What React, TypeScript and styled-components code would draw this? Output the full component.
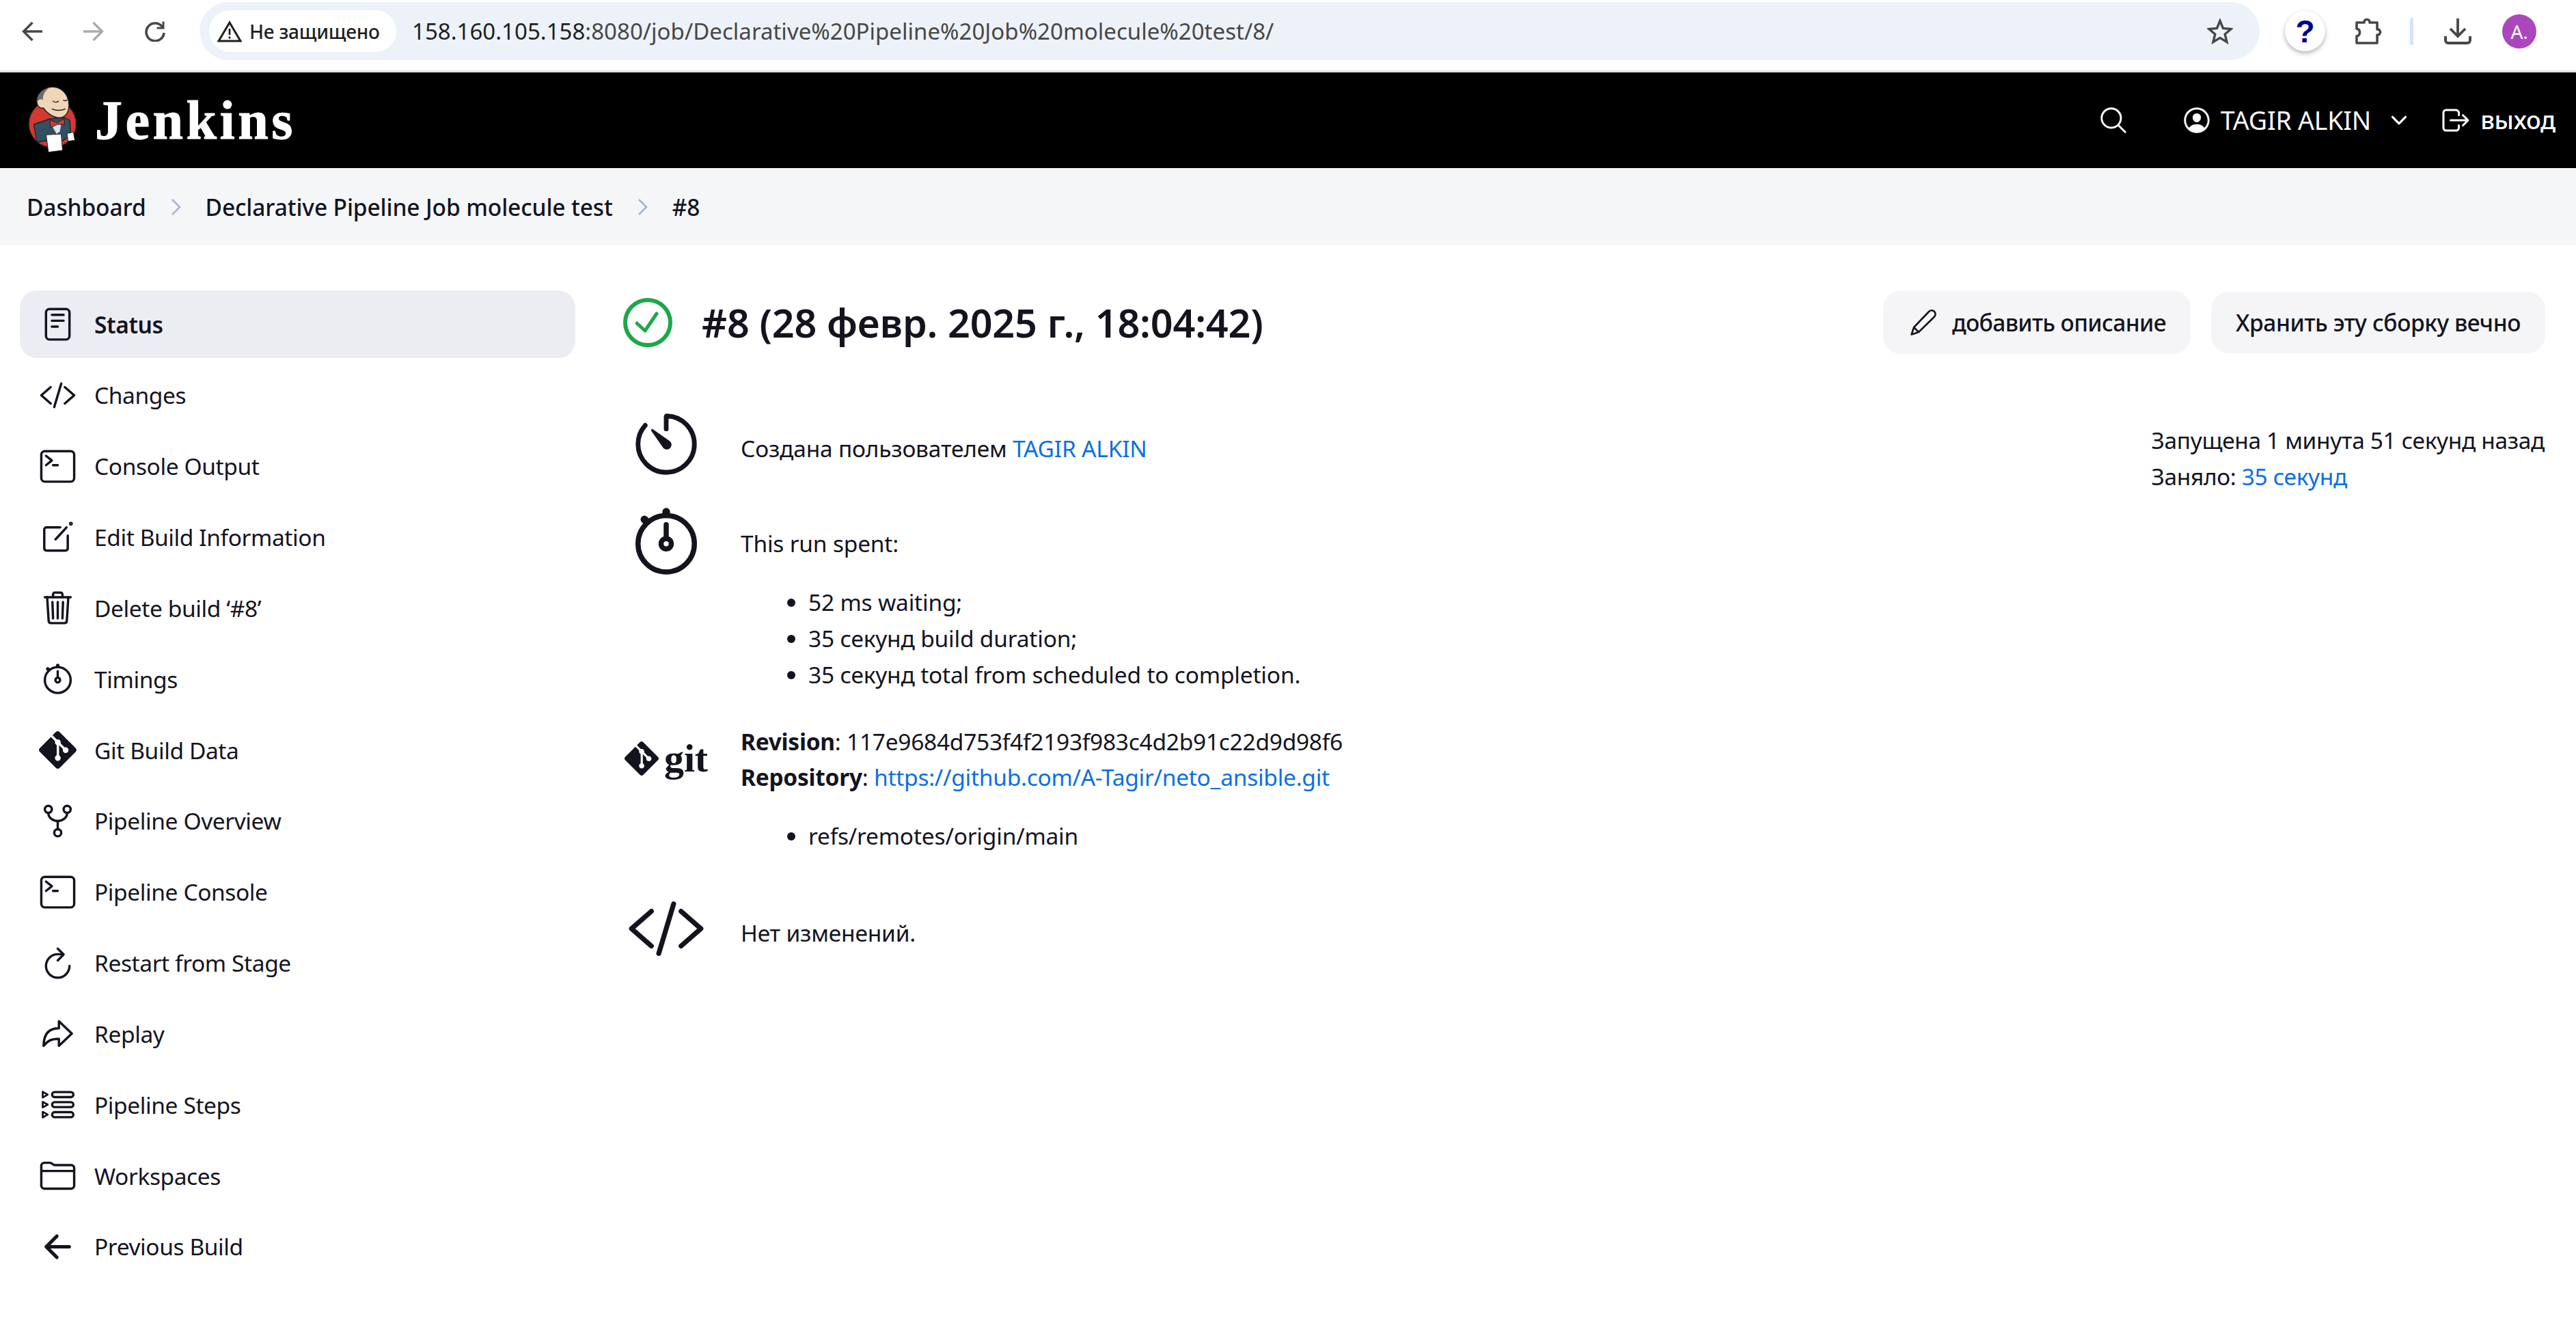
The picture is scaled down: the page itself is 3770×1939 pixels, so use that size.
import React from 'react';
import styled, { createGlobalStyle } from 'styled-components';
import {
  IoReaderOutline,
  IoCodeSlashOutline,
  IoTerminalOutline,
  IoTrashOutline,
  IoStopwatchOutline,
  IoGitNetworkOutline,
  IoRefreshOutline,
  IoArrowRedoOutline,
  IoFolderOutline,
  IoArrowBackOutline,
  IoTimerOutline,
  IoSearchOutline,
  IoPersonCircleOutline,
  IoChevronDownOutline,
  IoLogOutOutline,
} from 'react-icons/io5';
import { SiGit } from 'react-icons/si';

const GlobalStyle = createGlobalStyle`
  html, body {
    margin: 0;
    padding: 0;
    background: #fff;
  }
  body {
    font-family: "Noto Sans", "Open Sans", sans-serif;
    font-size: 33.5px;
    line-height: 52px;
    letter-spacing: -0.2px;
    color: #14141f;
  }
`;

const Page = styled.div`
  width: 3770px;
  height: 1939px;
  overflow: hidden;
  display: flex;
  flex-direction: column;
`;

/* browser toolbar */
const BrowserBar = styled.div`
  height: 100px;
  flex: none;
  display: flex;
  align-items: flex-start;
  padding: 3px 58px 0 32px;
  box-sizing: content-box;
  border-bottom: 3px solid #e3e4e6;
  background: #fff;
`;

const NavIcons = styled.div`
  display: flex;
  gap: 60px;
  height: 85px;
  align-items: center;
`;

const NavSvg = styled.svg<{ $muted?: boolean }>`
  width: 30px;
  height: 30px;
  fill: none;
  stroke: ${(p) => (p.$muted ? '#ababab' : '#474747')};
  stroke-width: 3.4;
`;

const AddressBar = styled.div`
  flex: 1;
  height: 85px;
  margin: 0 37px 0 50px;
  padding: 0 39px 0 14px;
  border-radius: 43px;
  background: #edf2fa;
  display: flex;
  align-items: center;
`;

const SecurityChip = styled.div`
  height: 61px;
  width: 274px;
  box-sizing: border-box;
  padding-left: 12px;
  border-radius: 31px;
  background: #fff;
  display: flex;
  align-items: center;
  gap: 11px;
  font-family: "Noto Sans", sans-serif;
  font-size: 28px;
  font-weight: 500;
  color: #1f1f1f;
  white-space: nowrap;
`;

const UrlText = styled.div`
  flex: 1;
  margin-left: 23px;
  font-size: 33px;
  letter-spacing: 0.02px;
  color: #474747;
  white-space: nowrap;
`;

const UrlHost = styled.span`
  color: #1f1f1f;
`;

const ToolIcons = styled.div`
  display: flex;
  align-items: center;
  height: 85px;
`;

const HelpBadge = styled.div`
  width: 59px;
  height: 59px;
  border-radius: 50%;
  background: #fff;
  box-shadow: 0 3px 6px rgba(0, 0, 0, 0.3);
  display: flex;
  align-items: center;
  justify-content: center;
  font-family: "Liberation Sans", sans-serif;
  font-weight: 700;
  font-size: 46px;
  color: #00008b;
`;

const ToolSvg = styled.svg<{ $left: number }>`
  width: 42px;
  height: 42px;
  margin-left: ${(p) => p.$left}px;
`;

const ToolDivider = styled.div`
  width: 5px;
  height: 40px;
  margin-left: 40px;
  border-radius: 3px;
  background: #d3e3fd;
`;

const Avatar = styled.div`
  width: 50px;
  height: 50px;
  margin-left: 44px;
  border-radius: 50%;
  background: #ab47bc;
  color: #fff;
  display: flex;
  align-items: center;
  justify-content: center;
  font-size: 28px;
`;

/* jenkins header */
const Header = styled.header`
  height: 140px;
  flex: none;
  background: #000;
  color: #fff;
  display: flex;
  align-items: center;
  padding: 0 30px 0 40px;
`;

const Mascot = styled.svg`
  width: 73px;
  height: 100px;
  flex: none;
`;

const Wordmark = styled.div`
  margin-left: 26px;
  font-family: "Liberation Serif", serif;
  font-weight: 700;
  font-size: 80px;
  letter-spacing: 4.5px;
  -webkit-text-stroke: 1px #fff;
`;

const HeaderTools = styled.div`
  margin-left: auto;
  display: flex;
  align-items: center;
`;

const HeaderIcon = styled.span<{ $left: number }>`
  display: flex;
  margin-left: ${(p) => p.$left}px;
`;

const HeaderName = styled.span`
  margin-left: 12px;
  font-size: 37.5px;
  white-space: nowrap;
`;

const HeaderLogout = styled.span`
  margin-left: 12px;
  font-size: 36px;
  font-weight: 500;
`;

/* breadcrumbs */
const Breadcrumbs = styled.nav`
  height: 113px;
  flex: none;
  background: #f5f6f8;
  display: flex;
  align-items: center;
  gap: 35px;
  padding-left: 39px;
  font-weight: 500;
  font-size: 33.5px;
  letter-spacing: -0.12px;
`;

const CrumbSep = styled.svg`
  width: 17px;
  height: 26px;
  fill: none;
  stroke: #a3b5cd;
  stroke-width: 2.6;
`;

/* main */
const Main = styled.main`
  flex: 1;
  display: flex;
  padding: 66px 45px 0 29px;
`;

const Sidebar = styled.aside`
  width: 813px;
  flex: none;
  display: flex;
  flex-direction: column;
  gap: 4.85px;
`;

const SideItem = styled.a<{ $active?: boolean }>`
  height: 99px;
  display: flex;
  align-items: center;
  gap: 26px;
  padding-left: 27px;
  border-radius: 25px;
  background: ${(p) => (p.$active ? '#ecedf2' : 'transparent')};
  font-weight: ${(p) => (p.$active ? 600 : 400)};
  font-size: 33.5px;
  letter-spacing: -0.4px;
  color: #14141f;
`;

const SideIcon = styled.span`
  width: 56px;
  height: 56px;
  flex: none;
  display: flex;
  align-items: center;
  justify-content: center;
  font-size: 55px;
  color: #14141f;
`;

const Content = styled.section`
  flex: 1;
  margin-left: 70px;
  display: flex;
  flex-direction: column;
`;

const TitleRow = styled.div`
  height: 93px;
  display: flex;
  align-items: center;
`;

const StatusSvg = styled.svg`
  width: 72px;
  height: 72px;
  flex: none;
  fill: none;
  stroke: #1ea64b;
  stroke-linecap: round;
  stroke-linejoin: round;
`;

const Title = styled.h1`
  margin: 0 0 0 43px;
  font-size: 57.5px;
  line-height: 70px;
  font-weight: 600;
  white-space: nowrap;
`;

const TitleActions = styled.div`
  margin-left: auto;
  display: flex;
  align-items: center;
  gap: 30px;
`;

const ActionButton = styled.button<{ $withIcon?: boolean }>`
  height: ${(p) => (p.$withIcon ? 93 : 90)}px;
  border: 0;
  border-radius: 26px;
  background: #f5f5f7;
  color: #14141f;
  display: flex;
  align-items: center;
  gap: 23px;
  padding: 0 36px 0 ${(p) => (p.$withIcon ? 40 : 36)}px;
  font-family: inherit;
  font-size: 33.5px;
  font-weight: 500;
  letter-spacing: ${(p) => (p.$withIcon ? -0.6 : -0.4)}px;
  white-space: nowrap;
`;

const PencilSvg = styled.svg`
  width: 38px;
  height: 38px;
  fill: none;
  stroke: #14141f;
  stroke-width: 2.6;
  stroke-linejoin: round;
`;

const Body = styled.div`
  display: flex;
  justify-content: space-between;
  align-items: flex-start;
`;

const Facts = styled.div`
  display: flex;
  flex-direction: column;
`;

const FactRow = styled.div<{ $top: number }>`
  display: flex;
  gap: 46px;
  margin-top: ${(p) => p.$top}px;
`;

const FactIcon = styled.div<{ $size: number; $top?: number }>`
  width: 126px;
  flex: none;
  display: flex;
  justify-content: center;
  align-items: flex-start;
  font-size: ${(p) => p.$size}px;
  line-height: 0;
  margin-top: ${(p) => p.$top ?? 0}px;
`;

const FactText = styled.div<{ $top?: number }>`
  margin-top: ${(p) => p.$top ?? 0}px;
`;

const Line = styled.div<{ $tight?: boolean }>`
  line-height: 52.5px;
  white-space: nowrap;
  letter-spacing: ${(p) => (p.$tight ? -0.27 : -0.2)}px;
`;

const Bullets = styled.ul<{ $top: number }>`
  margin: ${(p) => p.$top}px 0 0;
  padding: 0 0 0 99px;
  line-height: 53px;
`;

const Link = styled.a`
  color: #0b6fe4;
`;

const GitLogo = styled.div`
  display: flex;
  align-items: center;
  gap: 8px;
  font-size: 50px;
`;

const GitWord = styled.span`
  font-family: "Liberation Serif", serif;
  font-weight: 700;
  font-size: 58px;
  line-height: 50px;
`;

const Stats = styled.div`
  margin-top: 100px;
  margin-right: 1px;
  flex: none;

  & > div {
    letter-spacing: -0.36px;
  }
`;

const EditIcon = () => (
  <svg width="55" height="55" viewBox="0 0 60 60" fill="none" stroke="#14141f" strokeWidth="3.8" strokeLinecap="round" strokeLinejoin="round">
    <path d="M34 14H12a3.5 3.5 0 0 0-3.5 3.5v30A3.5 3.5 0 0 0 12 51h30.500a3.500 3.500 0 0 0 3.500-3.500V27" />
    <path d="M26.500 33L44 14" />
    <circle cx="51" cy="8" r="1.200" />
  </svg>
);

const StepsIcon = () => (
  <svg width="55" height="55" viewBox="0 0 60 60" fill="none" stroke="#14141f" strokeWidth="3" strokeLinejoin="round">
    {[14, 30, 46].map((y) => (
      <g key={y}>
        <path d={`M6 ${y - 4.5}L14 ${y}L6 ${y + 4.5}Z`} />
        <rect x="21" y={y - 4} width="34" height="8" rx="4" strokeWidth="3.6" />
      </g>
    ))}
  </svg>
);

const sideItems: { label: string; icon: React.ReactNode; active?: boolean }[] = [
  { label: 'Status', icon: <IoReaderOutline />, active: true },
  { label: 'Changes', icon: <IoCodeSlashOutline /> },
  { label: 'Console Output', icon: <IoTerminalOutline /> },
  { label: 'Edit Build Information', icon: <EditIcon /> },
  { label: 'Delete build ‘#8’', icon: <IoTrashOutline /> },
  { label: 'Timings', icon: <IoStopwatchOutline /> },
  { label: 'Git Build Data', icon: <SiGit /> },
  { label: 'Pipeline Overview', icon: <IoGitNetworkOutline /> },
  { label: 'Pipeline Console', icon: <IoTerminalOutline /> },
  { label: 'Restart from Stage', icon: <IoRefreshOutline /> },
  { label: 'Replay', icon: <IoArrowRedoOutline /> },
  { label: 'Pipeline Steps', icon: <StepsIcon /> },
  { label: 'Workspaces', icon: <IoFolderOutline /> },
  { label: 'Previous Build', icon: <IoArrowBackOutline /> },
];

const JenkinsMascot = () => (
  <Mascot viewBox="30 22 218 300">
    <circle cx="140" cy="188" r="104" fill="#d33833" stroke="#231f20" strokeWidth="4" />
    <path d="M58 190L128 166L192 160L216 172L220 236L186 262L120 268L108 262L72 268Z" fill="#335061" stroke="#231f20" strokeWidth="4" strokeLinejoin="round" />
    <path d="M135 192L178 190L172 222L158 232Z" fill="#d8e4ec" />
    <path d="M72 96C66 60 100 30 135 26C178 22 212 60 212 105C212 145 190 165 160 160C135 156 112 135 100 118C86 122 74 110 72 96Z" fill="#f0d6b7" stroke="#231f20" strokeWidth="4" />
    <path d="M74 92C68 62 92 36 124 30C106 44 96 62 98 84C90 76 78 80 74 92Z" fill="#6d6b6d" />
    <path d="M142 88Q155 98 166 88M188 84Q196 90 204 82" fill="none" stroke="#231f20" strokeWidth="4" strokeLinecap="round" />
    <path d="M138 122Q165 135 196 122" fill="none" stroke="#231f20" strokeWidth="4" strokeLinecap="round" />
    <path d="M128 170L160 183L190 165L194 190L162 190L132 204Z" fill="#d33833" stroke="#231f20" strokeWidth="3" strokeLinejoin="round" />
    <path d="M112 236L178 232L184 304L122 312Z" fill="#fff" stroke="#231f20" strokeWidth="3" strokeLinejoin="round" />
    <path d="M204 230L232 224L238 260L208 264Z" fill="#fff" stroke="#231f20" strokeWidth="3" strokeLinejoin="round" />
  </Mascot>
);

export default function App() {
  return (
    <Page>
      <GlobalStyle />
      <BrowserBar>
        <NavIcons>
          <NavSvg viewBox="0 0 30 30">
            <path d="M30 15H3M15.500 2L2.500 15L15.500 28" />
          </NavSvg>
          <NavSvg viewBox="0 0 30 30" $muted>
            <path d="M0 15H27M14.500 2L27.500 15L14.500 28" />
          </NavSvg>
          <NavSvg viewBox="0 0 30 30">
            <path d="M26 9A13 13 0 1 0 28 17" strokeWidth="3.6" />
            <path d="M28.500 0.500V11.500H17.500V8.500H25.500V0.500Z" fill="#474747" stroke="none" />
          </NavSvg>
        </NavIcons>
        <AddressBar>
          <SecurityChip>
            <svg width="36" height="32" viewBox="0 0 36 32" fill="none" stroke="#1f1f1f" strokeWidth="3">
              <path d="M18 3L34 30H2Z" strokeLinejoin="miter" />
              <path d="M18 12V21M18 23.500V26.500" strokeWidth="2.800" />
            </svg>
            Не защищено
          </SecurityChip>
          <UrlText>
            <UrlHost>158.160.105.158</UrlHost>:8080/job/Declarative%20Pipeline%20Job%20molecule%20test/8/
          </UrlText>
          <svg width="38" height="38" viewBox="0 0 38 38" fill="none" stroke="#474747" strokeWidth="3.400" strokeLinejoin="miter">
            <path d="M19 3.500L23.500 14.500L35 15.500L26.200 23L29 34.500L19 28.400L9 34.500L11.800 23L3 15.500L14.500 14.500Z" />
          </svg>
        </AddressBar>
        <ToolIcons>
          <HelpBadge>?</HelpBadge>
          <ToolSvg viewBox="0 0 42 42" $left={42}>
            <path d="M4 8H15C14 2 24 2 23 8H34V18C40 17 40 27 34 26V38H4V28C10 27 10 18 4 17Z" fill="none" stroke="#474747" strokeWidth="3.600" strokeLinejoin="round" />
          </ToolSvg>
          <ToolDivider />
          <ToolSvg viewBox="0 0 42 42" $left={44}>
            <path d="M21 2V27M10 17L21 28L32 17" fill="none" stroke="#474747" strokeWidth="3.800" />
            <path d="M3 28V34A4 4 0 0 0 7 38H35A4 4 0 0 0 39 34V28" fill="none" stroke="#474747" strokeWidth="4" />
          </ToolSvg>
          <Avatar>A.</Avatar>
        </ToolIcons>
      </BrowserBar>

      <Header>
        <JenkinsMascot />
        <Wordmark>Jenkins</Wordmark>
        <HeaderTools>
          <HeaderIcon $left={0}>
            <IoSearchOutline size={46} />
          </HeaderIcon>
          <HeaderIcon $left={76}>
            <IoPersonCircleOutline size={46} />
          </HeaderIcon>
          <HeaderName>TAGIR ALKIN</HeaderName>
          <HeaderIcon $left={24}>
            <IoChevronDownOutline size={34} />
          </HeaderIcon>
          <HeaderIcon $left={42}>
            <IoLogOutOutline size={48} />
          </HeaderIcon>
          <HeaderLogout>выход</HeaderLogout>
        </HeaderTools>
      </Header>

      <Breadcrumbs>
        <span>Dashboard</span>
        <CrumbSep viewBox="0 0 17 26">
          <path d="M3 2L14 13L3 24" />
        </CrumbSep>
        <span>Declarative Pipeline Job molecule test</span>
        <CrumbSep viewBox="0 0 17 26">
          <path d="M3 2L14 13L3 24" />
        </CrumbSep>
        <span>#8</span>
      </Breadcrumbs>

      <Main>
        <Sidebar>
          {sideItems.map((item) => (
            <SideItem key={item.label} $active={item.active}>
              <SideIcon>{item.icon}</SideIcon>
              {item.label}
            </SideItem>
          ))}
        </Sidebar>

        <Content>
          <TitleRow>
            <StatusSvg viewBox="0 0 72 72">
              <circle cx="36" cy="36" r="33" strokeWidth="6" />
              <path d="M20 37L32 48L49 23" strokeWidth="5" />
            </StatusSvg>
            <Title>#8 (28 февр. 2025 г., 18:04:42)</Title>
            <TitleActions>
              <ActionButton $withIcon>
                <PencilSvg viewBox="0 0 38 38">
                  <path d="M1.500 36.500L5 26L27 3A4.500 4.500 0 0 1 35 10.500L12 33Z" />
                  <path d="M5 26L12 33" />
                </PencilSvg>
                добавить описание
              </ActionButton>
              <ActionButton>Хранить эту сборку вечно</ActionButton>
            </TitleActions>
          </TitleRow>

          <Body>
            <Facts>
              <FactRow $top={77}>
                <FactIcon $size={110}>
                  <IoTimerOutline />
                </FactIcon>
                <FactText $top={35}>
                  Создана пользователем <Link>TAGIR ALKIN</Link>
                </FactText>
              </FactRow>

              <FactRow $top={27}>
                <FactIcon $size={120}>
                  <IoStopwatchOutline />
                </FactIcon>
                <FactText $top={37}>
                  <Line>This run spent:</Line>
                  <Bullets $top={33}>
                    <li>52 ms waiting;</li>
                    <li>35 секунд build duration;</li>
                    <li>35 секунд total from scheduled to completion.</li>
                  </Bullets>
                </FactText>
              </FactRow>

              <FactRow $top={45}>
                <FactIcon $size={50} $top={26}>
                  <GitLogo>
                    <SiGit />
                    <GitWord>git</GitWord>
                  </GitLogo>
                </FactIcon>
                <FactText>
                  <Line $tight>
                    <b>Revision</b>: 117e9684d753f4f2193f983c4d2b91c22d9d98f6
                  </Line>
                  <Line $tight>
                    <b>Repository</b>: <Link>https://github.com/A-Tagir/neto_ansible.git</Link>
                  </Line>
                  <Bullets $top={33}>
                    <li>refs/remotes/origin/main</li>
                  </Bullets>
                </FactText>
              </FactRow>

              <FactRow $top={51}>
                <FactIcon $size={116}>
                  <IoCodeSlashOutline />
                </FactIcon>
                <FactText $top={38}>Нет изменений.</FactText>
              </FactRow>
            </Facts>

            <Stats>
              <Line>Запущена 1 минута 51 секунд назад</Line>
              <Line>
                Заняло: <Link>35 секунд</Link>
              </Line>
            </Stats>
          </Body>
        </Content>
      </Main>
    </Page>
  );
}
